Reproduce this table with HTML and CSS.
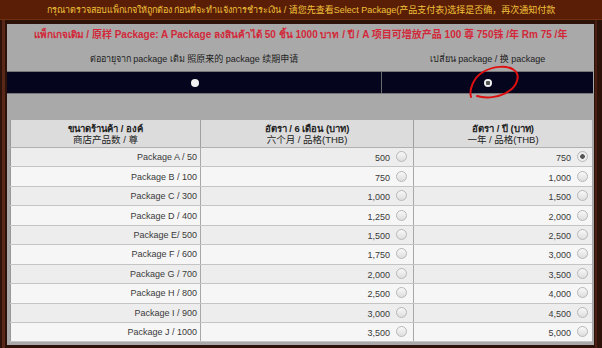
FILE: index.html
```html
<!DOCTYPE html>
<html>
<head>
<meta charset="utf-8">
<link rel="stylesheet" href="styles.css">
</head>
<body>
<div class="topbar">กรุณาตรวจสอบแพ็กเกจให้ถูกต้อง ก่อนที่จะทำแจ้งการชำระเงิน / 请您先查看Select Package(产品支付表)选择是否确，再次通知付款</div>
<div class="frame">
  <div class="panel">
    <div class="heading">แพ็กเกจเดิม / 原样 Package: A Package ลงสินค้าได้ 50 ชิ้น 1000 บาท / ปี / A 项目可增放产品 100 尊 750铢 /年 Rm 75 /年</div>
    <div class="choices">
      <div class="choice-label left">ต่ออายุจาก package เดิม 照原来的 package 续期申请</div>
      <div class="choice-label right">เปลี่ยน package / 换 package</div>
    </div>
    <div class="band">
      <div class="band-cell left"><span class="bradio"></span></div>
      <div class="band-cell right"><span class="bradio on"></span>
        <svg class="scribble" width="56" height="38" viewBox="0 0 56 38">
          <path d="M4 33 C2 26 6 14 16 8 C26 2 40 1 47 6 C54 11 50 22 42 27 C34 33 20 35 10 32" fill="none" stroke="#e01010" stroke-width="2" stroke-linecap="round"/>
        </svg>
      </div>
    </div>
    <table class="pkg">
      <thead>
        <tr>
          <th class="c1"><b>ขนาดร้านค้า / องค์</b><br>商店产品数 / 尊</th>
          <th class="c2"><b>อัตรา / 6 เดือน (บาท)</b><br>六个月 / 品格(THB)</th>
          <th class="c3"><b>อัตรา / ปี (บาท)</b><br>一年 / 品格(THB)</th>
        </tr>
      </thead>
      <tbody>
        <tr><td class="c1">Package A / 50</td><td class="c2">500<span class="radio"></span></td><td class="c3">750<span class="radio on"></span></td></tr>
        <tr><td class="c1">Package B / 100</td><td class="c2">750<span class="radio"></span></td><td class="c3">1,000<span class="radio"></span></td></tr>
        <tr><td class="c1">Package C / 300</td><td class="c2">1,000<span class="radio"></span></td><td class="c3">1,500<span class="radio"></span></td></tr>
        <tr><td class="c1">Package D / 400</td><td class="c2">1,250<span class="radio"></span></td><td class="c3">2,000<span class="radio"></span></td></tr>
        <tr><td class="c1">Package E/ 500</td><td class="c2">1,500<span class="radio"></span></td><td class="c3">2,500<span class="radio"></span></td></tr>
        <tr><td class="c1">Package F / 600</td><td class="c2">1,750<span class="radio"></span></td><td class="c3">3,000<span class="radio"></span></td></tr>
        <tr><td class="c1">Package G / 700</td><td class="c2">2,000<span class="radio"></span></td><td class="c3">3,500<span class="radio"></span></td></tr>
        <tr><td class="c1">Package H / 800</td><td class="c2">2,500<span class="radio"></span></td><td class="c3">4,000<span class="radio"></span></td></tr>
        <tr><td class="c1">Package I / 900</td><td class="c2">3,000<span class="radio"></span></td><td class="c3">4,500<span class="radio"></span></td></tr>
        <tr><td class="c1">Package J / 1000</td><td class="c2">3,500<span class="radio"></span></td><td class="c3">5,000<span class="radio"></span></td></tr>
      </tbody>
    </table>
  </div>
</div>
</body>
</html>
```
FILE: styles.css
```css
html, body {
  margin: 0;
  padding: 0;
}
body {
  width: 602px;
  height: 348px;
  overflow: hidden;
  background: #2c1209;
  font-family: Tahoma, "Liberation Sans", "Noto Sans CJK SC", sans-serif;
  font-size: 9px;
  color: #333;
}
.topbar {
  height: 19px;
  line-height: 20px;
  background: #5a1e07;
  border-bottom: 1px solid #6e3010;
  color: #f2c23a;
  text-align: center;
  font-size: 9px;
  white-space: nowrap;
}
.frame {
  padding: 4px 8px 3px 7px;
  background: #2c1209;
  box-shadow: inset 2px 0 #2c1209, inset 5px 0 #5a2818, inset -5px 0 #2c1209, inset -7px 0 #4a1e12;
}
.panel {
  background: #a9a9a9;
  height: 321px;
  display: flex;
  flex-direction: column;
}
.heading {
  height: 21px;
  line-height: 20px;
  text-align: center;
  color: #d3283a;
  font-weight: bold;
  font-size: 10px;
  white-space: nowrap;
  padding-top: 1px;
}
.choices {
  display: flex;
  height: 25px;
  line-height: 26px;
  color: #222;
  font-size: 9px;
}
.choice-label.left {
  width: 374px;
  text-align: center;
}
.choice-label.right {
  flex: 1;
  text-align: center;
}
.band {
  display: flex;
  height: 21px;
  margin: 0 1px 0 0;
  background: #05051e;
  border-top: 1px solid #777;
  border-bottom: 1px solid #777;
}
.band-cell {
  position: relative;
  display: flex;
  align-items: center;
  justify-content: center;
}
.band-cell.left {
  width: 374px;
  border-right: 1px solid #6a6a6a;
}
.band-cell.right {
  flex: 1;
  justify-content: flex-start;
  padding-left: 102px;
}
.bradio {
  width: 8px;
  height: 8px;
  border-radius: 50%;
  background: #f2f2f2;
  display: inline-block;
}
.bradio.on {
  width: 8px;
  height: 8px;
  background: radial-gradient(circle, #555 0 2px, #f2f2f2 2.5px);
}
.band-cell.left .bradio {
  margin-left: 2px;
}
.scribble {
  position: absolute;
  left: 85px;
  top: -8px;
}
.pkg {
  margin: 26px 0 0 3px;
  width: 580px;
  border-collapse: collapse;
  table-layout: fixed;
  background: #ededed;
  border-left: 1px solid #999;
}
.pkg th {
  background: #dcdcdc;
  font-weight: normal;
  color: #222;
  height: 27px;
  line-height: 11px;
  padding: 0;
  text-align: center;
  border-bottom: 1px solid #b0b0b0;
  border-right: 1px solid #a0a0a0;
  font-size: 9.5px;
}
.pkg th b {
  font-weight: bold;
}
.pkg th.c1 { width: 189px; }
.pkg th.c2 { width: 212px; }
.pkg th.c3 { width: 178px; border-right: none; }
.pkg td {
  height: 18.45px;
  padding: 0;
  text-align: right;
  border-bottom: 1px solid #c4c4c4;
  border-right: 1px solid #a8a8a8;
  color: #3a3a3a;
  white-space: nowrap;
  font-size: 9px;
}
.pkg tbody tr:nth-child(even) td {
  background: #f6f6f6;
}
.pkg td.c1 {
  padding-right: 3px;
}
.pkg td.c2 {
  padding-right: 6px;
}
.pkg td.c3 {
  padding-right: 4px;
  border-right: none;
}
.radio {
  display: inline-block;
  width: 9px;
  height: 9px;
  border: 1px solid #b8b8b8;
  border-radius: 50%;
  background: linear-gradient(#f8f8f8, #dedede);
  margin-left: 6px;
  vertical-align: -1px;
}
.radio.on {
  background: radial-gradient(circle, #555 0 2px, #eee 2.6px);
}
```
